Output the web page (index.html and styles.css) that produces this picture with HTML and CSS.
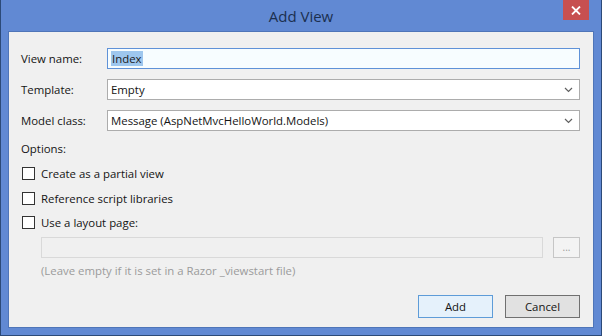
FILE: index.html
```html
<!DOCTYPE html>
<html>
<head>
<meta charset="utf-8">
<link rel="stylesheet" href="styles.css">
</head>
<body>
<div class="window">
  <div class="titlebar">
    <span class="title">Add View</span>
    <div class="close">
      <svg width="10" height="9" viewBox="0 0 10 9"><path d="M1 0.5 L9 8.5 M9 0.5 L1 8.5" stroke="#fff" stroke-width="1.8"/></svg>
    </div>
  </div>
  <div class="panel">
    <div class="row">
      <label class="lbl">View name:</label>
      <div class="field focused"><span class="sel">Index</span></div>
    </div>
    <div class="row">
      <label class="lbl">Template:</label>
      <div class="field combo"><span>Empty</span><svg class="chev" width="9" height="6" viewBox="0 0 9 6"><path d="M1 1 L4.5 4.5 L8 1" fill="none" stroke="#606060" stroke-width="1.2"/></svg></div>
    </div>
    <div class="row">
      <label class="lbl">Model class:</label>
      <div class="field combo"><span>Message (AspNetMvcHelloWorld.Models)</span><svg class="chev" width="9" height="6" viewBox="0 0 9 6"><path d="M1 1 L4.5 4.5 L8 1" fill="none" stroke="#606060" stroke-width="1.2"/></svg></div>
    </div>
    <div class="options">Options:</div>
    <div class="check"><span class="box"></span><span>Create as a partial view</span></div>
    <div class="check"><span class="box"></span><span>Reference script libraries</span></div>
    <div class="check"><span class="box"></span><span>Use a layout page:</span></div>
    <div class="layout-row">
      <div class="field disabled"></div>
      <div class="browse">...</div>
    </div>
    <div class="hint">(Leave empty if it is set in a Razor _viewstart file)</div>
    <div class="buttons">
      <div class="btn primary">Add</div>
      <div class="btn">Cancel</div>
    </div>
  </div>
</div>
</body>
</html>
```
FILE: styles.css
```css
html, body {
  margin: 0;
  padding: 0;
  background: #6189d3;
}
.window {
  width: 602px;
  height: 336px;
  box-sizing: border-box;
  background: #6189d3;
  border-left: 1px solid #2c4a78;
  border-right: 1px solid #2c4a78;
  border-bottom: 1px solid #2c4a78;
  display: flex;
  flex-direction: column;
  padding: 0 7px 7px 7px;
  font-family: "Open Sans", "Noto Sans", sans-serif;
  font-size: 11.4px;
  color: #141414;
}
.titlebar {
  height: 31px;
  display: flex;
  align-items: center;
  justify-content: center;
  position: relative;
}
.title {
  font-size: 15px;
  color: #1b2f4f;
  margin-top: 1px;
}
.close {
  position: absolute;
  right: 5px;
  top: 0;
  width: 26px;
  height: 20px;
  background: #c75050;
  display: flex;
  align-items: center;
  justify-content: center;
}
.panel {
  flex: 1;
  background: #f0f0f0;
  border: 1px solid #4f75b8;
  box-sizing: border-box;
  padding: 16px 13px 0 12px;
  display: flex;
  flex-direction: column;
}
.row {
  display: flex;
  align-items: center;
  height: 21px;
  margin-bottom: 10px;
}
.lbl {
  width: 86px;
  flex: none;
}
.field {
  flex: 1;
  height: 21px;
  box-sizing: border-box;
  border: 1px solid #acacac;
  background: #fff;
  display: flex;
  align-items: center;
  padding-left: 3px;
}
.field.focused {
  border-color: #5f92d8;
  background: #f7fdff;
}
.sel {
  background: #9ec7ee;
  color: #1a1a1a;
  line-height: 15px;
  padding: 0 1px;
}
.combo {
  justify-content: space-between;
  padding-right: 6px;
}
.chev {
  flex: none;
}
.options {
  margin-top: 0;
  height: 16px;
  line-height: 16px;
}
.check {
  display: flex;
  align-items: center;
  height: 16px;
  margin-top: 8.5px;
}
.box {
  width: 11px;
  height: 11px;
  border: 1px solid #333;
  background: #fff;
  margin-left: 1px;
  margin-right: 6px;
}
.layout-row {
  display: flex;
  margin-top: 6px;
  margin-left: 20px;
  gap: 10px;
  height: 21px;
}
.field.disabled {
  background: #f0f0f0;
  border-color: #d9d9d9;
}
.browse {
  width: 27px;
  height: 21px;
  box-sizing: border-box;
  border: 1px solid #c6c6c6;
  background: #f3f3f3;
  color: #9a9a9a;
  font-size: 10px;
  display: flex;
  align-items: center;
  justify-content: center;
}
.hint {
  margin-left: 20px;
  margin-top: 5px;
  color: #9b9b9b;
}
.buttons {
  display: flex;
  justify-content: flex-end;
  gap: 12px;
  margin-top: 17px;
}
.btn {
  width: 75px;
  height: 23px;
  box-sizing: border-box;
  border: 1px solid #707070;
  background: #e1e1e1;
  display: flex;
  align-items: center;
  justify-content: center;
}
.btn.primary {
  background: #e5f1fb;
  border: 1px solid #5e9cd8;
}
```
